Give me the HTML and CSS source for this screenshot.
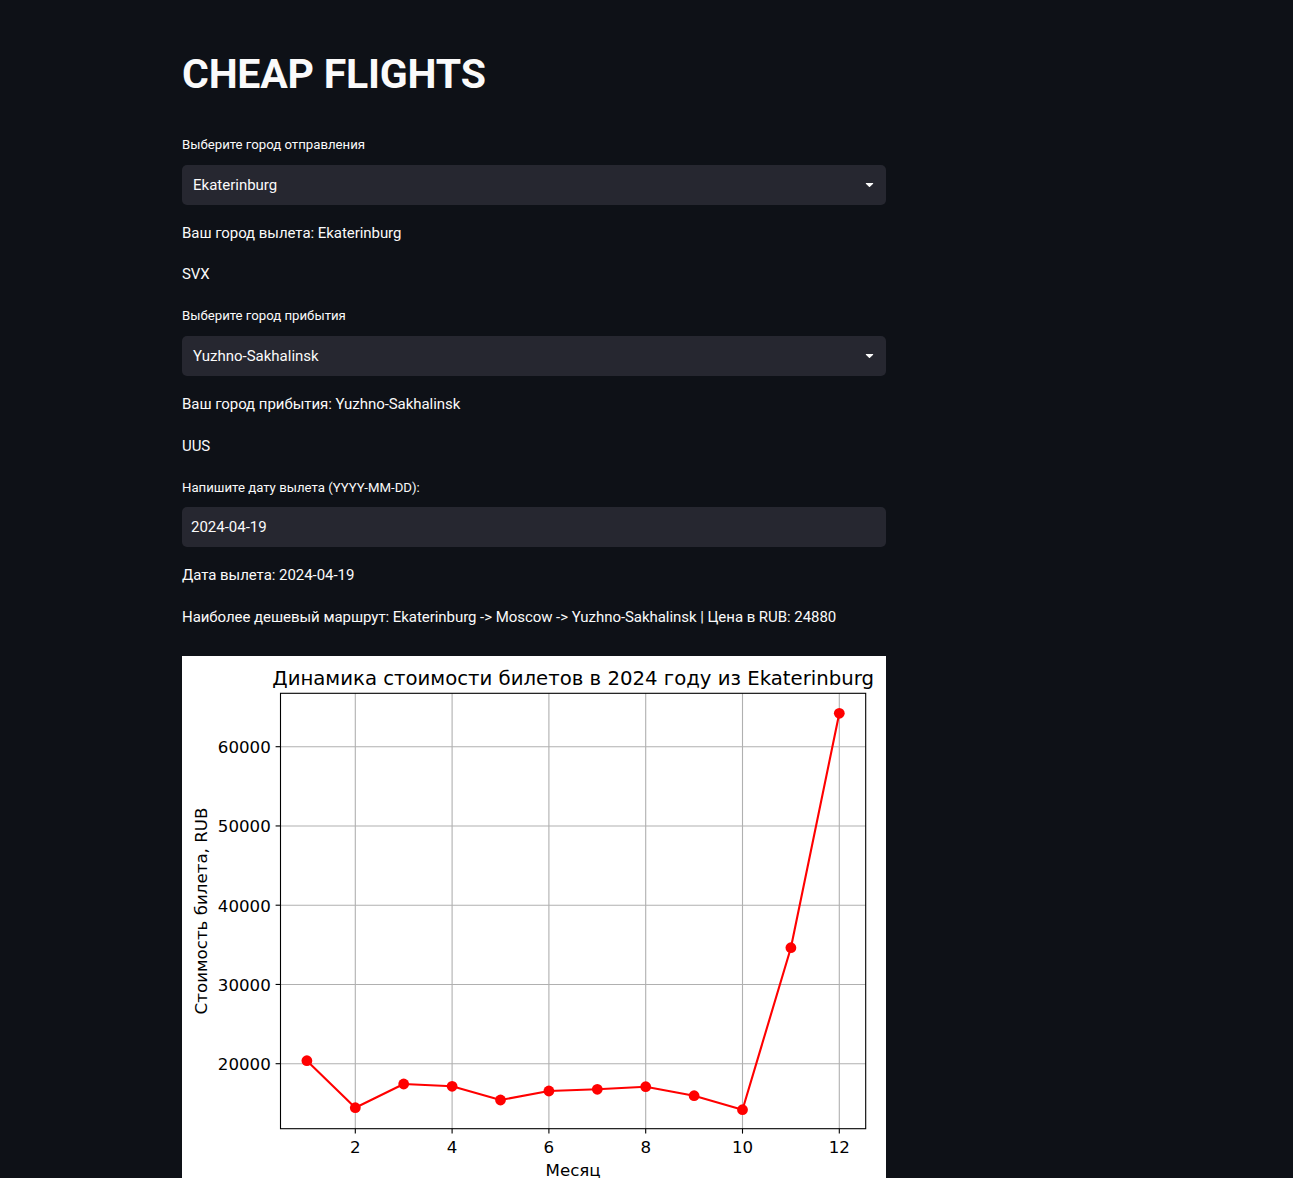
FILE: index.html
```html
<!DOCTYPE html>
<html lang="ru">
<head>
<meta charset="utf-8">
<title>CHEAP FLIGHTS</title>
<link rel="stylesheet" href="styles.css">
</head>
<body>
<main class="app">
  <h1 class="title">CHEAP FLIGHTS</h1>

  <div class="widget">
    <label class="label">Выберите город отправления</label>
    <div class="select">
      <span class="select-value">Ekaterinburg</span>
      <svg class="caret" viewBox="0 0 24 24" width="17" height="17"><path fill="#fafafa" d="M12.7071 15.2929L17.1464 10.8536C17.4614 10.5386 17.2383 10 16.7929 10L7.20711 10C6.76165 10 6.53857 10.5386 6.85355 10.8536L11.2929 15.2929C11.6834 15.6834 12.3166 15.6834 12.7071 15.2929Z"/></svg>
    </div>
  </div>
  <p class="text">Ваш город вылета: Ekaterinburg</p>
  <p class="text">SVX</p>

  <div class="widget">
    <label class="label">Выберите город прибытия</label>
    <div class="select">
      <span class="select-value">Yuzhno-Sakhalinsk</span>
      <svg class="caret" viewBox="0 0 24 24" width="17" height="17"><path fill="#fafafa" d="M12.7071 15.2929L17.1464 10.8536C17.4614 10.5386 17.2383 10 16.7929 10L7.20711 10C6.76165 10 6.53857 10.5386 6.85355 10.8536L11.2929 15.2929C11.6834 15.6834 12.3166 15.6834 12.7071 15.2929Z"/></svg>
    </div>
  </div>
  <p class="text">Ваш город прибытия: Yuzhno-Sakhalinsk</p>
  <p class="text">UUS</p>

  <div class="widget">
    <label class="label">Напишите дату вылета (YYYY-MM-DD):</label>
    <div class="input">2024-04-19</div>
  </div>
  <p class="text">Дата вылета: 2024-04-19</p>
  <p class="text">Наиболее дешевый маршрут: Ekaterinburg -&gt; Moscow -&gt; Yuzhno-Sakhalinsk | Цена в RUB: 24880</p>

  <div class="chart">
    <svg class="chart-svg" viewBox="0 0 704 530" width="704" height="530">
      <rect x="0" y="0" width="704" height="530" fill="#ffffff"/>
      <g stroke="#b0b0b0" stroke-width="1.1">
        <line x1="173.3" y1="37.3" x2="173.3" y2="472.7"/>
        <line x1="270.1" y1="37.3" x2="270.1" y2="472.7"/>
        <line x1="366.9" y1="37.3" x2="366.9" y2="472.7"/>
        <line x1="463.7" y1="37.3" x2="463.7" y2="472.7"/>
        <line x1="560.5" y1="37.3" x2="560.5" y2="472.7"/>
        <line x1="657.3" y1="37.3" x2="657.3" y2="472.7"/>
        <line x1="98.5" y1="90.7" x2="683.7" y2="90.7"/>
        <line x1="98.5" y1="169.95" x2="683.7" y2="169.95"/>
        <line x1="98.5" y1="249.2" x2="683.7" y2="249.2"/>
        <line x1="98.5" y1="328.45" x2="683.7" y2="328.45"/>
        <line x1="98.5" y1="407.7" x2="683.7" y2="407.7"/>
      </g>
      <polyline fill="none" stroke="#ff0000" stroke-width="2.1" stroke-linejoin="round"
        points="124.9,404.7 173.3,451.7 221.7,428 270.1,430.3 318.5,444 366.9,435 415.3,433.3 463.7,430.7 512.1,439.7 560.5,453.7 608.9,291.7 657.3,57.3"/>
      <g fill="#ff0000">
        <circle cx="124.9" cy="404.7" r="5.4"/>
        <circle cx="173.3" cy="451.7" r="5.4"/>
        <circle cx="221.7" cy="428" r="5.4"/>
        <circle cx="270.1" cy="430.3" r="5.4"/>
        <circle cx="318.5" cy="444" r="5.4"/>
        <circle cx="366.9" cy="435" r="5.4"/>
        <circle cx="415.3" cy="433.3" r="5.4"/>
        <circle cx="463.7" cy="430.7" r="5.4"/>
        <circle cx="512.1" cy="439.7" r="5.4"/>
        <circle cx="560.5" cy="453.7" r="5.4"/>
        <circle cx="608.9" cy="291.7" r="5.4"/>
        <circle cx="657.3" cy="57.3" r="5.4"/>
      </g>
      <rect x="98.5" y="37.3" width="585.2" height="435.4" fill="none" stroke="#000000" stroke-width="1.1"/>
      <g stroke="#000000" stroke-width="1.1">
        <line x1="173.3" y1="472.7" x2="173.3" y2="477.6"/>
        <line x1="270.1" y1="472.7" x2="270.1" y2="477.6"/>
        <line x1="366.9" y1="472.7" x2="366.9" y2="477.6"/>
        <line x1="463.7" y1="472.7" x2="463.7" y2="477.6"/>
        <line x1="560.5" y1="472.7" x2="560.5" y2="477.6"/>
        <line x1="657.3" y1="472.7" x2="657.3" y2="477.6"/>
        <line x1="93.6" y1="90.7" x2="98.5" y2="90.7"/>
        <line x1="93.6" y1="169.95" x2="98.5" y2="169.95"/>
        <line x1="93.6" y1="249.2" x2="98.5" y2="249.2"/>
        <line x1="93.6" y1="328.45" x2="98.5" y2="328.45"/>
        <line x1="93.6" y1="407.7" x2="98.5" y2="407.7"/>
      </g>
      <g class="tick" text-anchor="middle">
        <text x="173.3" y="497.3">2</text>
        <text x="270.1" y="497.3">4</text>
        <text x="366.9" y="497.3">6</text>
        <text x="463.7" y="497.3">8</text>
        <text x="560.5" y="497.3">10</text>
        <text x="657.3" y="497.3">12</text>
      </g>
      <g class="tick" text-anchor="end">
        <text x="88.8" y="97">60000</text>
        <text x="88.8" y="176.2">50000</text>
        <text x="88.8" y="255.5">40000</text>
        <text x="88.8" y="334.7">30000</text>
        <text x="88.8" y="414">20000</text>
      </g>
      <text class="chart-title" x="391.1" y="29" text-anchor="middle">Динамика стоимости билетов в 2024 году из Ekaterinburg</text>
      <text class="axis-label" x="391.1" y="520" text-anchor="middle">Месяц</text>
      <text class="axis-label" x="0" y="0" text-anchor="middle" transform="translate(24.5 255) rotate(-90)">Стоимость билета, RUB</text>
    </svg>
  </div>
</main>
</body>
</html>
```

FILE: styles.css
```css
html, body {
  margin: 0;
  padding: 0;
  background: #0e1117;
}

body {
  color: #fafafa;
  font-family: Roboto, "Noto Sans", "Liberation Sans", sans-serif;
}

.app {
  width: 704px;
  margin-left: 182px;
  padding-top: 28px;
  display: flex;
  flex-direction: column;
  gap: 16px;
}

.title {
  margin: 0;
  padding: 20px 0 16px;
  font-size: 41px;
  line-height: 52.8px;
  letter-spacing: -0.2px;
  font-weight: 700;
  color: #fafafa;
}

.widget {
  display: flex;
  flex-direction: column;
}

.label {
  display: flex;
  align-items: center;
  height: 24px;
  margin-bottom: 8px;
  font-size: 13.2px;
  color: #fafafa;
}

.select {
  height: 40px;
  background: #262730;
  border-radius: 5px;
  display: flex;
  align-items: center;
  justify-content: space-between;
  padding-left: 11px;
  box-sizing: border-box;
}

.select-value {
  font-size: 15px;
}

.caret {
  margin-right: 8px;
  display: block;
}

.input {
  height: 40px;
  background: #262730;
  border-radius: 5px;
  display: flex;
  align-items: center;
  padding-left: 9px;
  box-sizing: border-box;
  font-size: 15px;
}

.text {
  margin: 0;
  font-size: 15px;
  line-height: 25.6px;
  letter-spacing: -0.05px;
}

.chart {
  margin-top: 10px;
}

.chart-svg {
  display: block;
}

.tick,
.axis-label {
  font-family: "DejaVu Sans", sans-serif;
  font-size: 16.67px;
  fill: #000000;
}

.chart-title {
  font-family: "DejaVu Sans", sans-serif;
  font-size: 19.7px;
  fill: #000000;
}
```
